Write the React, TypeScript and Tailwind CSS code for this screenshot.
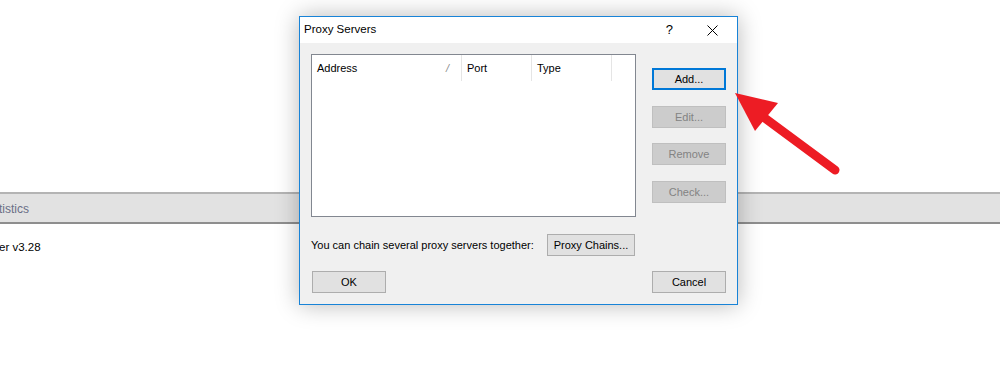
import React from "react"

const font = { fontFamily: '"Liberation Sans", Arial, sans-serif' }

function WinButton({
  label,
  disabled = false,
  focused = false,
  className = "",
}: {
  label: string
  disabled?: boolean
  focused?: boolean
  className?: string
}) {
  return (
    <button
      className={`h-[22px] flex items-center justify-center text-[11px] leading-none ${
        focused
          ? "border-2 border-[#0078d7] bg-[#e1e1e1] text-black"
          : disabled
          ? "border border-[#bfbfbf] bg-[#cccccc] text-[#838383]"
          : "border border-[#adadad] bg-[#e1e1e1] text-black"
      } ${className}`}
    >
      {label}
    </button>
  )
}

export default function App() {
  return (
    <div className="relative w-[1000px] h-[370px] overflow-hidden bg-white" style={font}>
      {/* app behind the dialog */}
      <div className="pt-[192px]">
        <div className="h-[32px] border-t-2 border-b-2 border-t-[#b4b4b4] border-b-[#8e8e8e] bg-[#e2e2e2] flex items-center pt-px">
          <span className="text-[12px] text-[#6a6f86] -ml-px">tistics</span>
        </div>
        <div className="mt-[15px] text-[11.5px] text-black -ml-px">er v3.28</div>
      </div>

      {/* dialog */}
      <div className="absolute left-[299px] top-[16px] w-[439px] h-[289px] border border-[#1883d7] bg-[#f0f0f0] shadow-[0_0_22px_rgba(0,0,0,0.28)] flex flex-col">
        <div className="h-[26px] bg-white flex items-center pl-[4px] text-[11.5px] text-black">
          <span>Proxy Servers</span>
          <span className="ml-auto mr-[34px] text-[13px]">?</span>
          <svg width="11" height="11" viewBox="0 0 11 11" className="mr-[19px]">
            <path d="M0.5 0.5 L10.5 10.5 M10.5 0.5 L0.5 10.5" stroke="#000" strokeWidth="1" />
          </svg>
        </div>

        <div className="flex-1 flex flex-col px-[11px] pt-[11px] pb-[11px]">
          <div className="flex">
            {/* list view */}
            <div className="w-[325px] h-[163px] border border-[#828790] bg-white">
              <div className="flex h-[26px] text-[11px] text-black">
                <div className="w-[150px] flex items-center pl-[5px] pr-[12px] border-r border-[#e5e5e5]">
                  <span>Address</span>
                  <span className="ml-auto text-[#8a8a8a] italic">/</span>
                </div>
                <div className="w-[70px] flex items-center pl-[5px] border-r border-[#e5e5e5]">Port</div>
                <div className="w-[80px] flex items-center pl-[5px] border-r border-[#e5e5e5]">Type</div>
              </div>
            </div>

            <div className="ml-[16px] pt-[14px] flex flex-col">
              <WinButton label="Add..." focused className="w-[74px]" />
              <WinButton label="Edit..." disabled className="w-[74px] mt-[16px]" />
              <WinButton label="Remove" disabled className="w-[74px] mt-[15px]" />
              <WinButton label="Check..." disabled className="w-[74px] mt-[16px]" />
            </div>
          </div>

          <div className="mt-[17px] flex items-center w-[324px]">
            <span className="text-[11px] text-black">You can chain several proxy servers together:</span>
            <WinButton label="Proxy Chains..." className="ml-auto w-[88px]" />
          </div>

          <div className="mt-auto flex items-end">
            <WinButton label="OK" className="ml-px w-[74px]" />
            <WinButton label="Cancel" className="ml-auto w-[74px]" />
          </div>
        </div>
      </div>

      {/* red annotation arrow */}
      <svg className="absolute inset-0 pointer-events-none" width="1000" height="370" viewBox="0 0 1000 370">
        <line x1="762" y1="116" x2="835" y2="170" stroke="#ed1c24" strokeWidth="9" strokeLinecap="round" />
        <polygon points="735,93 778,103 755,131" fill="#ed1c24" />
      </svg>
    </div>
  )
}
